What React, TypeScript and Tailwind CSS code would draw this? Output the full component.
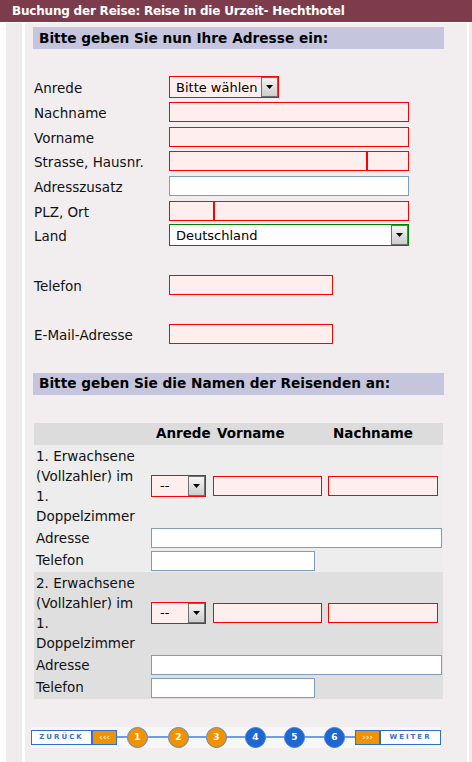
import React from "react";

const Caret = () => (
  <svg width="7" height="4" viewBox="0 0 7 4" className="block">
    <path d="M0 0 L7 0 L3.5 4 Z" fill="#000" />
  </svg>
);

function DropButton() {
  return (
    <div className="w-[17px] h-full border border-[#6e6e6e] bg-gradient-to-b from-[#f6f6f6] to-[#cdcdcd] flex items-center justify-center shrink-0">
      <Caret />
    </div>
  );
}

function Select({
  w,
  text,
  tone,
  pl = "pl-[6px]",
}: {
  w: string;
  text: string;
  tone: "red" | "green";
  pl?: string;
}) {
  const box =
    tone === "red"
      ? "border-[#ff0000] bg-[#ffeeee]"
      : "border-[#008000] bg-white";
  return (
    <div className={`${w} h-[22px] border ${box} flex items-stretch`}>
      <div className={`flex-1 flex items-center ${pl} text-[13px] text-black leading-none`}>
        {text}
      </div>
      <DropButton />
    </div>
  );
}

function Field({ w, plain = false }: { w: string; plain?: boolean }) {
  const box = plain
    ? "border-[#7f9db9] bg-white"
    : "border-[#ff0000] bg-[#ffeeee]";
  return <div className={`${w} h-[20px] border ${box} shrink-0`} />;
}

function Row({ label, children }: { label?: string; children?: React.ReactNode }) {
  return (
    <div className="flex items-center h-[24.7px]">
      <div className="w-[135px] text-[13.5px] text-[#111] pt-[2px]">{label}</div>
      {children}
    </div>
  );
}

function Heading({ children }: { children: React.ReactNode }) {
  return (
    <div className="ml-[8px] w-[411px] h-[22px] bg-[#c5c6dd] pl-[6px] flex items-center font-bold text-[13.7px] text-black">
      {children}
    </div>
  );
}

function Traveler({ n, bg }: { n: number; bg: string }) {
  return (
    <div className={bg}>
      <div className="grid grid-cols-[117px_59px_115px_118px] h-[82px]">
        <div className="pl-[2px] pt-[1px] text-[13.5px] leading-[20px] text-[#111]">
          {n}. Erwachsene
          <br />
          (Vollzahler) im
          <br />
          1.
          <br />
          Doppelzimmer
        </div>
        <div className="flex items-center">
          <Select w="w-[55px]" text="--" tone="red" pl="pl-[8px]" />
        </div>
        <div className="flex items-center pl-[3px]">
          <Field w="w-[109px]" />
        </div>
        <div className="flex items-center pl-[3px]">
          <Field w="w-[110px]" />
        </div>
      </div>
      <div className="flex items-center h-[23px]">
        <div className="w-[117px] pl-[2px] text-[13.5px] text-[#111]">Adresse</div>
        <Field w="w-[291px]" plain />
      </div>
      <div className="flex items-center h-[22px]">
        <div className="w-[117px] pl-[2px] text-[13.5px] text-[#111]">Telefon</div>
        <Field w="w-[164px]" plain />
      </div>
    </div>
  );
}

function Step({ n, done }: { n: number; done: boolean }) {
  const c = done
    ? "bg-[#f39200] border-[#4f86d6]"
    : "bg-[#1e66d0] border-[#3a78d8]";
  return (
    <div
      className={`w-[21px] h-[21px] rounded-full border ${c} flex items-center justify-center text-white font-bold text-[9px] leading-none shrink-0`}
    >
      {n}
    </div>
  );
}

const Line = ({ w }: { w: string }) => <div className={`${w} h-[2px] bg-[#6f9fe2] shrink-0`} />;

function StepNav() {
  return (
    <div className="ml-[6px] w-[410px] h-[21px] bg-[#f7f7f7] flex items-center">
      <div className="w-[61px] h-[15px] border border-[#2f6fd2] bg-white flex items-center justify-center text-[7px] font-bold tracking-[2px] text-[#3b70d0] leading-none shrink-0">
        ZURÜCK
      </div>
      <div className="w-[25px] h-[15px] border border-[#2f6fd2] bg-[#f39200] flex items-center justify-center text-[9px] font-bold text-[#ffe6b8] leading-none shrink-0">
        ‹‹‹
      </div>
      <Line w="w-[10px]" />
      <Step n={1} done />
      <Line w="w-[20px]" />
      <Step n={2} done />
      <Line w="w-[17px]" />
      <Step n={3} done />
      <Line w="w-[18px]" />
      <Step n={4} done={false} />
      <Line w="w-[18px]" />
      <Step n={5} done={false} />
      <Line w="w-[19px]" />
      <Step n={6} done={false} />
      <Line w="w-[10px]" />
      <div className="w-[25px] h-[15px] border border-[#2f6fd2] bg-[#f39200] flex items-center justify-center text-[9px] font-bold text-[#ffe6b8] leading-none shrink-0">
        ›››
      </div>
      <div className="w-[61px] h-[15px] border border-[#2f6fd2] bg-white flex items-center justify-center text-[7px] font-bold tracking-[2px] text-[#3b70d0] leading-none shrink-0">
        WEITER
      </div>
    </div>
  );
}

export default function App() {
  return (
    <div className="w-[472px] min-h-[762px] bg-white font-['DejaVu_Sans',Verdana,sans-serif] flex flex-col">
      <div className="h-[22px] bg-[#7d3c4b] text-white font-bold text-[12px] tracking-[-0.2px] pl-[12px] flex items-center">
        Buchung der Reise: Reise in die Urzeit- Hechthotel
      </div>
      <div className="flex flex-1 mt-[1px]">
        <div className="w-[6px] bg-white" />
        <div className="w-[16px] bg-[#f0ecee]" />
        <div className="w-[3px] bg-white" />
        <div className="w-[442px] bg-[#f2eeef] pt-[4px] pb-[12px]">
          <Heading>Bitte geben Sie nun Ihre Adresse ein:</Heading>

          <div className="mt-[26px] pl-[9px]">
            <Row label="Anrede">
              <Select w="w-[110px]" text="Bitte wählen" tone="red" />
            </Row>
            <Row label="Nachname">
              <Field w="w-[240px]" />
            </Row>
            <Row label="Vorname">
              <Field w="w-[240px]" />
            </Row>
            <Row label="Strasse, Hausnr.">
              <Field w="w-[198px]" />
              <Field w="w-[42px]" />
            </Row>
            <Row label="Adresszusatz">
              <Field w="w-[240px]" plain />
            </Row>
            <Row label="PLZ, Ort">
              <Field w="w-[45px]" />
              <Field w="w-[195px]" />
            </Row>
            <Row label="Land">
              <Select w="w-[240px]" text="Deutschland" tone="green" />
            </Row>
            <Row />
            <Row label="Telefon">
              <Field w="w-[164px]" />
            </Row>
            <Row />
            <Row label="E-Mail-Adresse">
              <Field w="w-[164px]" />
            </Row>
          </div>

          <div className="mt-[26px]">
            <Heading>Bitte geben Sie die Namen der Reisenden an:</Heading>
          </div>

          <div className="mt-[28px] ml-[9px] w-[409px]">
            <div className="grid grid-cols-[117px_59px_115px_118px] h-[22px] bg-[#dcdcdc] items-center font-bold text-[13.5px] text-black whitespace-nowrap">
              <div />
              <div className="pl-[5px]">Anrede</div>
              <div className="pl-[7px]">Vorname</div>
              <div className="pl-[8px]">Nachname</div>
            </div>
            <Traveler n={1} bg="bg-[#ededed]" />
            <Traveler n={2} bg="bg-[#dfdfdf]" />
          </div>

          <div className="mt-[28px]">
            <StepNav />
          </div>
        </div>
        <div className="w-[2px] bg-white" />
        <div className="flex-1 bg-[#f0ecee]" />
      </div>
    </div>
  );
}
